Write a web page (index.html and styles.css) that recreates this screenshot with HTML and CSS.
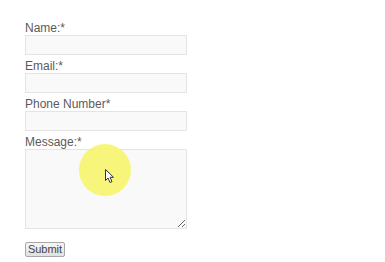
FILE: index.html
```html
<!DOCTYPE html>
<html lang="en">
<head>
   <meta charset="UTF-8">
   <meta name="viewport" content="width=device-width, initial-scale=1.0">
   <title>Contact Form</title>
   <link rel="stylesheet" href="styles.css">
</head>
<body>
   <form class="contact-form">
       <div class="field">
           <label for="name">Name:*</label>
           <input type="text" id="name">
       </div>
       <div class="field">
           <label for="email">Email:*</label>
           <input type="text" id="email">
       </div>
       <div class="field">
           <label for="phone">Phone Number*</label>
           <input type="text" id="phone">
       </div>
       <div class="field">
           <label for="message">Message:*</label>
           <textarea id="message"></textarea>
       </div>
       <button type="button" class="submit-btn">Submit</button>
   </form>

   <!-- click highlight from the screen recording -->
   <div class="cursor-spot"></div>
   <svg class="cursor" width="10" height="15" viewBox="0 0 10 15">
       <path d="M0.5 0.5 L0.5 11.5 L3 9 L5 13.5 L7 12.6 L5 8.3 L8.5 8.3 Z" fill="#fff" stroke="#333" stroke-width="1"/>
   </svg>
</body>
</html>
```

FILE: styles.css
```css
body {
    margin: 0;
    background: #fff;
    font-family: "Liberation Sans", Arial, sans-serif;
    color: #5a5a5a;
}

.contact-form {
    padding: 21px 0 0 25px;
    width: 162px;
}

.field {
    margin-bottom: 4px;
}

label {
    display: block;
    font-size: 12px;
    line-height: 14px;
}

input,
textarea {
    display: block;
    box-sizing: border-box;
    width: 162px;
    height: 20px;
    margin: 0;
    border: 1px solid #e4e4e4;
    background: #f9f9f9;
    font-family: inherit;
}

textarea {
    height: 80px;
    resize: vertical;
}

.submit-btn {
    display: block;
    margin-top: 13px;
    width: 40px;
    height: 15px;
    padding: 0;
    font-family: inherit;
    font-size: 11px;
    line-height: 13px;
    color: #444;
    background: linear-gradient(#f6f6f6, #e0e0e0);
    border: 1px solid #a8a8a8;
    border-radius: 2px;
}

.cursor-spot {
    position: absolute;
    left: 79px;
    top: 144px;
    width: 52px;
    height: 52px;
    border-radius: 50%;
    background: #f6f56c;
    opacity: 0.9;
}

.cursor {
    position: absolute;
    left: 105px;
    top: 169px;
}
```
